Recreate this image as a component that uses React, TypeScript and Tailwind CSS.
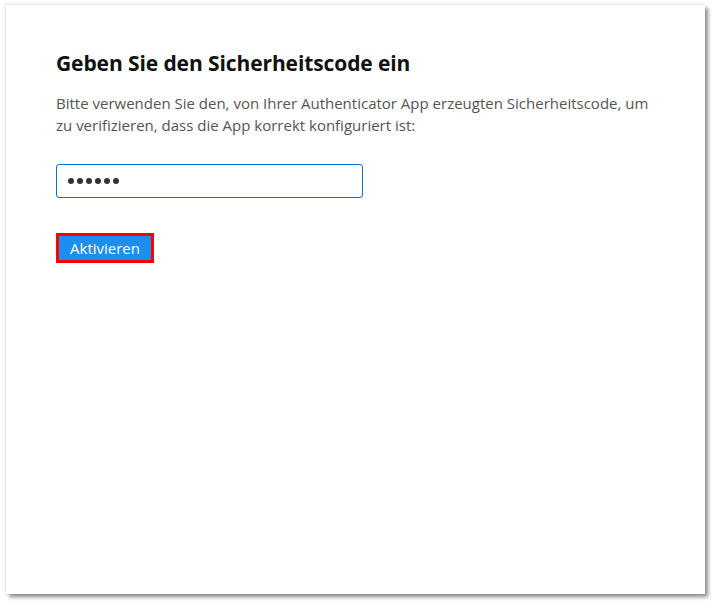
export default function App() {
  const font = { fontFamily: '"Open Sans", "Noto Sans", Arial, sans-serif' };
  return (
    <div className="w-[714px] h-[603px] bg-white pl-[6px] pt-[5px]" style={font}>
      <div className="w-[699px] h-[589px] bg-white shadow-[3px_3px_4px_rgba(0,0,0,0.45),-1px_-1px_3px_rgba(0,0,0,0.12)] pl-[50px] pt-[44px]">
        <h1 className="text-[21px] leading-[28px] font-bold text-[#111] tracking-[-0.1px]">
          Geben Sie den Sicherheitscode ein
        </h1>
        <p className="mt-[15px] text-[15px] leading-[22px] text-[#555]">
          Bitte verwenden Sie den, von Ihrer Authenticator App erzeugten Sicherheitscode, um
          <br />
          zu verifizieren, dass die App korrekt konfiguriert ist:
        </p>
        <div className="mt-[28px] w-[307px] h-[34px] border border-[#0a6ed1] rounded-[3px] flex items-center pl-[11px] gap-[3px]">
          {Array.from({ length: 6 }).map((_, i) => (
            <span key={i} className="w-[6px] h-[6px] rounded-full bg-[#333]" />
          ))}
        </div>
        <div className="mt-[35px] inline-flex border-[3px] border-[#f00]">
          <button className="w-[92px] h-[24px] bg-[#1a8ff0] text-white text-[15px] leading-[24px]">
            Aktivieren
          </button>
        </div>
      </div>
    </div>
  );
}
